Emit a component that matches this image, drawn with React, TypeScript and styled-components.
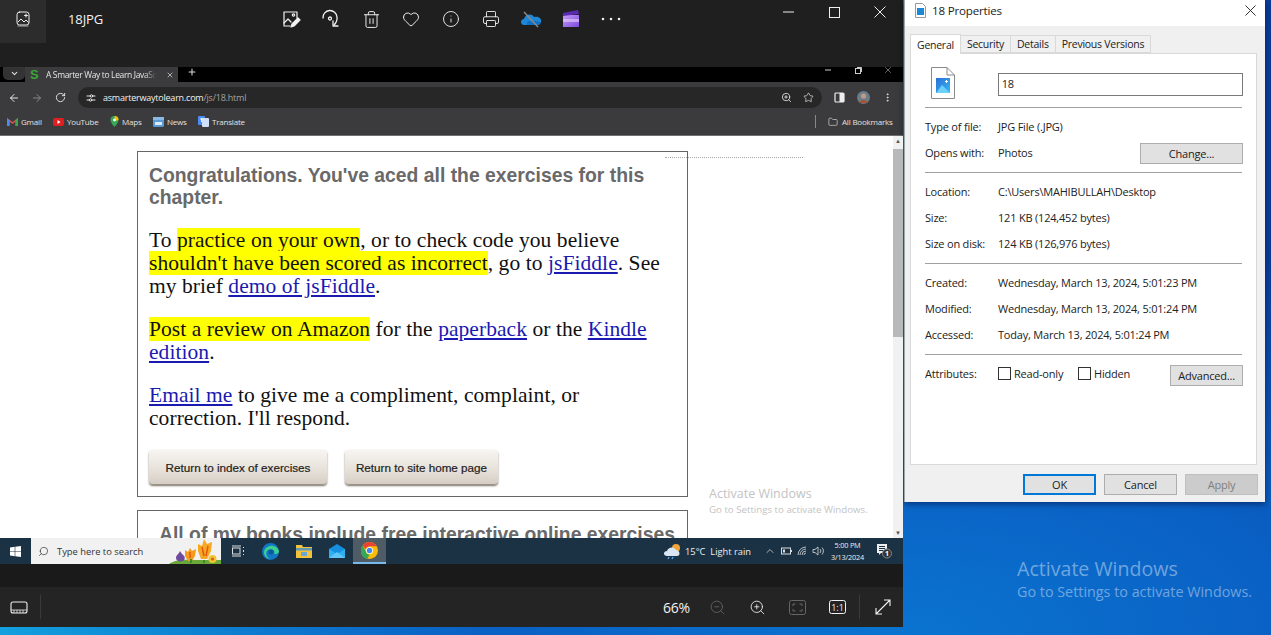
import React from "react";
import styled, { createGlobalStyle } from "styled-components";
import { Heart, Info, Printer, Trash2, Plus, X, ChevronDown, ArrowLeft, ArrowRight, RotateCw, Star, ZoomIn, ZoomOut, Folder, EllipsisVertical, ChevronUp, Search } from "lucide-react";

const Global = createGlobalStyle`
  html, body { margin: 0; padding: 0; width: 1271px; height: 635px; overflow: hidden; }
  * { box-sizing: border-box; }
`;

const Desktop = styled.div`
  width: 1271px; height: 635px; display: flex; align-items: flex-start; overflow: hidden;
  font-family: "Open Sans", "Noto Sans", sans-serif;
  background: radial-gradient(ellipse 900px 420px at 900px 640px, #0a74d0 0%, #0a60c4 45%, rgba(8,66,170,0) 100%), linear-gradient(90deg, #12a0de 0%, #0a7ed0 70%, #0a46ac 90%, #0a3c9c 100%);
`;
const Photos = styled.div`width: 903px; height: 627px; display: flex; flex-direction: column; flex: none; background: #1c1c1c;`;
const TitleBar = styled.div`height: 67px; flex: none; display: flex; align-items: flex-start; background: #1f1f1f; color: #fff;`;
const ThumbButton = styled.div`width: 46px; height: 43px; background: #2c2c2c; display: flex; align-items: center; justify-content: center; padding-bottom: 6px;`;
const FileName = styled.div`width: 225px; padding: 11px 0 0 22px; font-size: 13px; line-height: 17px; letter-spacing: -.1px; color: #f2f2f2;`;
const ToolRow = styled.div`display: flex; height: 38px; margin-left: 0;`;
const ToolSlot = styled.div`width: 40px; height: 38px; display: flex; align-items: center; justify-content: center; color: #f2f2f2;`;
const WinControls = styled.div`margin-left: 134px; display: flex; color: #eee;`;
const WinSlot = styled.div`width: 46px; height: 24px; display: flex; align-items: center; justify-content: center;`;

const Shot = styled.div`height: 497px; flex: none; display: flex; flex-direction: column; overflow: hidden;`;
const TabStrip = styled.div`height: 15px; flex: none; background: #000; display: flex; align-items: flex-start; color: #ddd;`;
const TabList = styled.div`width: 22px; height: 13px; margin-left: 3px; background: #333; border-radius: 0 0 5px 5px; display: flex; align-items: center; justify-content: center;`;
const Tab = styled.div`width: 153px; height: 15px; background: #3b3b3d; display: flex; align-items: center; font-size: 8.5px; color: #e4e4e4; padding-left: 4px;`;
const TabTitle = styled.span`width: 110px; margin-left: 3px; white-space: nowrap; overflow: hidden; letter-spacing: -.36px; -webkit-mask-image: linear-gradient(90deg,#000 90%,transparent);`;
const TabLogo = styled.span`color: #3aa635; font: bold 13px/13px "Liberation Sans", sans-serif; width: 13px; margin-left: 1px;`;
const TabClose = styled.span`margin-left: 10px; display: flex;`;
const StripControls = styled.div`margin-left: auto; display: flex; width: 90px; height: 8px; align-self: flex-start;`;
const StripSlot = styled.div`width: 30px; height: 6px; display: flex; align-items: center; justify-content: center; color: #ccc;`;
const NavBar = styled.div`height: 31px; flex: none; background: #3b3b3d; display: flex; align-items: center; color: #e8e8e8;`;
const NavSlot = styled.div<{ $w: number; $dim?: boolean }>`width: ${p => p.$w}px; display: flex; justify-content: center; align-items: center; flex: none; color: ${p => p.$dim ? "#888" : "inherit"};`;
const UrlPill = styled.div`width: 744px; height: 21px; flex: none; background: #272727; border-radius: 11px; display: flex; align-items: center; font-size: 9px; letter-spacing: -.22px;`;
const UrlHost = styled.span`color: #f0f0f0;`;
const UrlPath = styled.span`color: #a3a3a3; flex: 1;`;
const BookBar = styled.div`height: 23px; flex: none; background: #3b3b3d; border-bottom: 1px solid #6f6f6f; display: flex; align-items: center; padding: 0 0 5px 7px; font-size: 8px; letter-spacing: -.2px; color: #e2e2e2;`;
const BookMark = styled.div<{ $w: number }>`width: ${p => p.$w}px; display: flex; align-items: center; gap: 3px; flex: none;`;
const BookSep = styled.div`width: 1px; height: 13px; background: #888; margin-left: auto;`;
const AllBooks = styled.div`width: 87px; padding-left: 12px; display: flex; align-items: center; gap: 4px;`;

const Viewport = styled.div`height: 402px; flex: none; background: #fff; display: flex; overflow: hidden; position: relative;`;
const Page = styled.div`flex: 1; padding: 15px 0 0 137px; display: flex; flex-direction: column; gap: 13px; height: 402px; overflow: hidden;`;
const Card = styled.div`width: 551px; flex: none; border: 1px solid #666; padding: 12px 11px 0; background: #fff;`;
const Heading = styled.h2<{ $pl?: number }>`margin: 0; padding-left: ${p => p.$pl ?? 0}px; font: bold 19.35px/22px "Liberation Sans", Arial, sans-serif; color: #696969;`;
const Para = styled.p`margin: 20px 0 0; font: 21.5px/23px "Liberation Serif", serif; letter-spacing: .06px; color: #111; width: 518px; ${Heading} + & { margin-top: 21px; }`;
const Mark = styled.span`background: #ff0;`;
const Link = styled.a`color: #1a1ab0; text-decoration: underline;`;
const BtnRow = styled.div`display: flex; gap: 18px; margin: 20px 0 11px;`;
const PageBtn = styled.div<{ $w: number }>`width: ${p => p.$w}px; height: 35px; border-radius: 4px; background: linear-gradient(#f7f5f2, #e6e0d8 60%, #d6cec5); box-shadow: 0 1px 2px #7d7468; border-bottom: 1px solid #9a9186; display: flex; align-items: center; justify-content: center; font: 11.7px "Liberation Sans", Arial, sans-serif; color: #222; -webkit-text-stroke: .2px #222; padding-top: 1px;`;
const Scrollbar = styled.div`width: 10px; flex: none; background: #f1f1f1; display: flex; flex-direction: column; align-items: center; color: #555; font-size: 6px; line-height: 10px;`;
const ScrollThumb = styled.div`width: 10px; height: 188px; margin-top: 3px; background: #b9b9b9;`;
const ScrollDown = styled.div`margin-top: auto;`;
const Dots = styled.div`position: absolute; left: 665px; top: 21px; width: 138px; border-top: 1px dotted #aaa;`;
const WatermarkSmall = styled.div`position: absolute; left: 709px; top: 350px; color: #c3c3c3; font-size: 12.5px; line-height: 16px; span { display: block; font-size: 9.7px; line-height: 15px; }`;

const Taskbar = styled.div`height: 26px; flex: none; background: #1b3244; display: flex; align-items: center; color: #eee; font-size: 9.3px;`;
const StartSlot = styled.div`width: 31px; display: flex; justify-content: center;`;
const SearchBox = styled.div`width: 190px; height: 26px; background: #f1f1f1; display: flex; align-items: center; padding-left: 7px; gap: 8px; color: #333; position: relative; overflow: hidden; font-size: 9.4px;`;
const SearchGlass = styled.span`display: flex; transform: scaleX(-1);`;
const FlowerArt = styled.svg`position: absolute; right: 0; top: 0;`;
const TaskSlot = styled.div<{ $active?: boolean }>`width: 33px; height: 26px; display: flex; align-items: center; justify-content: center; background: ${p => p.$active ? "#4f5c66" : "transparent"}; border-bottom: ${p => p.$active ? "2px solid #76b9ed" : "none"};`;
const Tray = styled.div`margin-left: auto; display: flex; align-items: center; padding-right: 4px; height: 26px;`;
const Weather = styled.div`display: flex; align-items: center; gap: 4px; width: 99px;`;
const TrayIcon = styled.div`width: 16px; display: flex; justify-content: center; color: #ddd;`;
const Clock = styled.div`width: 43px; text-align: center; font-size: 7.3px; line-height: 12px; color: #eee; letter-spacing: -.2px;`;
const Notif = styled.div`width: 30px; display: flex; justify-content: center;`;

const GapBand = styled.div`height: 23px; flex: none; background: #1a1a1a;`;
const BottomBar = styled.div`height: 40px; flex: none; background: #242424; display: flex; align-items: center; color: #f0f0f0;`;
const FilmSlot = styled.div`width: 41px; height: 24px; display: flex; align-items: center; justify-content: center; border-right: 1px solid #3a3a3a; padding-right: 2px;`;
const Zoom = styled.div`margin-left: auto; font-size: 14px; width: 34px; text-align: left; color: #f2f2f2; letter-spacing: -.3px;`;
const BarSlot = styled.div<{ $dim?: boolean }>`width: 40px; display: flex; justify-content: center; color: ${p => p.$dim ? "#666" : "#f2f2f2"};`;
const BarSep = styled.div`width: 1px; height: 24px; background: #3a3a3a; margin: 0 3px 0 2px;`;

const Side = styled.div`margin-left: 1px; width: 361px; flex: none; display: flex; flex-direction: column;`;
const Dialog = styled.div`height: 502px; background: #f0f0f0; display: flex; flex-direction: column; font-size: 11px; color: #222; letter-spacing: -.2px; border-left: 1px solid #9aa; box-shadow: 0 2px 6px rgba(0,0,40,.5);`;
const DialogTitle = styled.div`height: 26px; background: #fff; display: flex; align-items: center; padding: 0 9px 5px 10px; font-size: 11.6px; gap: 6px; color: #222;`;
const DialogClose = styled.div`margin-left: auto; display: flex;`;
const Tabs = styled.div`display: flex; height: 27px; align-items: flex-end; padding-left: 5px; font-size: 10.5px; letter-spacing: -.25px;`;
const TabItem = styled.div<{ $active?: boolean }>`height: ${p => p.$active ? 20 : 18}px; padding: 0 6px; background: ${p => p.$active ? "#fff" : "#f0f0f0"}; border: 1px solid #d9d9d9; border-bottom: ${p => p.$active ? "none" : "1px solid #d9d9d9"}; border-left: ${p => p.$active ? "1px solid #d9d9d9" : "none"}; display: flex; align-items: center; white-space: nowrap; position: relative; z-index: ${p => p.$active ? 1 : 0}; margin-bottom: ${p => p.$active ? -1 : 0}px;`;
const Panel = styled.div`margin-left: 5px; width: 347px; height: 412px; flex: none; background: #fff; border: 1px solid #d9d9d9; padding: 13px 13px 0 14px;`;
const NameRow = styled.div`display: flex; align-items: flex-start; height: 40px;`;
const FileIconSlot = styled.div`width: 73px; padding-left: 6px;`;
const NameInput = styled.div`width: 246px; height: 23px; margin-top: 6px; border: 1px solid #7a7a7a; padding-left: 3px; line-height: 19px;`;
const Sep = styled.div`height: 1px; background: #a0a0a0; width: 317px;`;
const Rows = styled.div<{ $pt: number; $pb: number }>`padding: ${p => p.$pt}px 0 ${p => p.$pb}px;`;
const Row = styled.div`display: flex; height: 26px; align-items: center;`;
const RowLabel = styled.div`width: 73px; flex: none;`;
const RowValue = styled.div`white-space: nowrap;`;
const WinBtn = styled.div<{ $w: number; $dis?: boolean; $def?: boolean }>`width: ${p => p.$w}px; height: 21px; background: ${p => p.$dis ? "#ccc" : "#e1e1e1"}; border: ${p => p.$def ? "2px solid #0078d7" : `1px solid ${p.$dis ? "#bfbfbf" : "#adadad"}`}; display: flex; align-items: center; justify-content: center; color: ${p => p.$dis ? "#808080" : "#222"}; flex: none;`;
const RowBtn = styled.div<{ $top: number }>`margin-left: auto; position: relative; top: ${p => p.$top}px;`;
const CheckBox = styled.span`width: 13px; height: 13px; border: 1px solid #333; background: #fff; display: inline-block; margin-right: 3px; flex: none;`;
const Check = styled.label<{ $w: number }>`display: flex; align-items: center; width: ${p => p.$w}px;`;
const DialogButtons = styled.div`display: flex; justify-content: flex-end; gap: 8px; padding: 9px 7px 0 0;`;
const Wall = styled.div`padding: 55px 0 0 113px; color: rgba(255,255,255,.42); font-size: 19.6px; line-height: 24px; span { display: block; font-size: 14.35px; line-height: 22px; }`;

const svgBase = { fill: "none", stroke: "currentColor", strokeLinecap: "round" as const, strokeLinejoin: "round" as const };

const GalleryIcon = () => (
  <svg width="16" height="16" viewBox="0 0 16 16" {...svgBase} strokeWidth={1}>
    <rect x="2" y="1" width="12" height="13" rx="2.500" stroke="#eee" />
    <path d="M3 11l3-3 3 3 2-2 2.500 2.500M11 3v3M9.500 4.500h3" stroke="#eee" />
    <path d="M3 15h10" stroke="#aaa" />
  </svg>
);
const EditIcon = () => (
  <svg width="20" height="20" viewBox="0 0 20 20" {...svgBase} strokeWidth={1.2}>
    <path d="M9 17H3V3h13v6" />
    <path d="M3 14l4-4 3 3" />
    <circle cx="12.500" cy="6" r="1.200" />
    <path d="M10 18l1-3 6-6 2 2-6 6z" fill="currentColor" />
  </svg>
);
const RotateIcon = () => (
  <svg width="20" height="20" viewBox="0 0 20 20" {...svgBase} strokeWidth={1.3}>
    <path d="M2 9a7 7 0 0 1 14-1c.5 3.500-1 6-3 8" />
    <path d="M12 12v5h5" />
    <circle cx="9" cy="9.500" r="1.500" />
  </svg>
);
const Cloud = () => (
  <svg width="22" height="18" viewBox="0 0 22 18">
    <path d="M4 15c-4 0-4-6 0-6 1-5 8-6 10-2 5-1 8 2 7 5-.5 2-2 3-3 3z" fill="#1f87d8" />
    <path d="M7 15c-1-3 2-5 5-4 3-1 6 1 9 1-.5 2-2 3-3 3z" fill="#0f6fc2" />
    <path d="M4 2l14 15" stroke="#8a8a8a" strokeWidth="1.500" />
  </svg>
);
const Clapper = () => (
  <svg width="18" height="18" viewBox="0 0 18 18">
    <defs><linearGradient id="cl" x1="0" y1="0" x2="1" y2="1"><stop offset="0" stopColor="#c79cf5" /><stop offset="1" stopColor="#7a4be0" /></linearGradient></defs>
    <rect x="1" y="5" width="16" height="12" fill="url(#cl)" />
    <path d="M1 3l15-3 1 4-16 2z" fill="#5a2bb0" />
    <path d="M1 9h16v3H1z" fill="#e8d0fb" opacity=".6" />
  </svg>
);
const DotsIcon = () => (
  <svg width="20" height="4" viewBox="0 0 20 4" fill="#eee"><circle cx="2" cy="2" r="1.300" /><circle cx="10" cy="2" r="1.300" /><circle cx="18" cy="2" r="1.300" /></svg>
);
const Minimize = ({ w = 11 }: { w?: number }) => <svg width={w} height="2" viewBox={`0 0 ${w} 2`}><path d={`M0 1h${w}`} stroke="currentColor" /></svg>;
const MaxBox = () => <svg width="11" height="11" viewBox="0 0 11 11"><rect x=".5" y=".5" width="10" height="10" fill="none" stroke="currentColor" /></svg>;
const Restore = () => <svg width="7" height="7" viewBox="0 0 7 7" fill="none" stroke="currentColor"><rect x=".5" y="1.500" width="5" height="5" /><path d="M2 .5h4.500V5" /></svg>;
const Cross = ({ s = 12 }: { s?: number }) => <svg width={s} height={s} viewBox="0 0 12 12"><path d="M.5.5l11 11M11.500.5l-11 11" stroke="currentColor" fill="none" /></svg>;

const SiteTune = () => (
  <svg width="10" height="10" viewBox="0 0 10 10" {...svgBase} strokeWidth={1}><path d="M1 3h3M7 3h2M1 7h2M6 7h3" /><circle cx="5.500" cy="3" r="1.200" /><circle cx="4.500" cy="7" r="1.200" /></svg>
);
const SidePanel = () => <svg width="11" height="11" viewBox="0 0 11 11"><rect x="1" y="1" width="9" height="9" rx="1" fill="none" stroke="#eee" strokeWidth="1.200" /><rect x="5.500" y="1" width="4.500" height="9" fill="#eee" /></svg>;
const Avatar = () => <svg width="13" height="13" viewBox="0 0 13 13"><circle cx="6.500" cy="6.500" r="6.500" fill="#6c7c8a" /><circle cx="6.500" cy="5" r="2.600" fill="#c29a80" /><path d="M2 12c1-4 8-4 9 0z" fill="#a0553a" /></svg>;

const GmailIcon = () => <svg width="11" height="9" viewBox="0 0 11 9"><path d="M0 9V1l5.500 4L11 1v8H8.500V4.500L5.500 7 2.500 4.500V9z" fill="#d9534a" /><path d="M0 1l2.500 2V9H0z" fill="#4c8bf0" /><path d="M11 1L8.500 3V9H11z" fill="#36a852" /></svg>;
const YtIcon = () => <svg width="11" height="8" viewBox="0 0 11 8"><rect width="11" height="8" rx="2" fill="#e02020" /><path d="M4.500 2l3 2-3 2z" fill="#fff" /></svg>;
const MapsIcon = () => <svg width="9" height="11" viewBox="0 0 9 11"><path d="M4.500 0a4 4 0 0 1 4 4c0 3-4 7-4 7S.5 7 .5 4a4 4 0 0 1 4-4z" fill="#35a853" /><path d="M4.500 0a4 4 0 0 1 4 4L5 5z" fill="#fbbc05" /><circle cx="4.500" cy="4" r="1.400" fill="#fff" /></svg>;
const NewsIcon = () => <svg width="11" height="11" viewBox="0 0 11 11"><rect y="1" width="11" height="10" rx="1.500" fill="#5b9bd5" /><rect y="1" width="11" height="3" fill="#8ab8e8" /><rect x="2" y="6" width="7" height="3" fill="#dbe9f8" /></svg>;
const TranslateIcon = () => <svg width="11" height="11" viewBox="0 0 11 11"><rect width="7" height="9" rx="1" fill="#4c8bf0" /><rect x="4" y="2" width="7" height="9" rx="1" fill="#cfe0f8" /><path d="M2 3h3M3.500 2v4" stroke="#fff" strokeWidth=".8" /></svg>;

const WinLogo = () => <svg width="11" height="11" viewBox="0 0 11 11" fill="#fff"><path d="M0 1.500l4.700-.7v4.400H0zM5.300.7L11 0v5.200H5.300zM0 5.800h4.700v4.400L0 9.500zM5.300 5.800H11V11l-5.700-.8z" /></svg>;
const Flowers = () => (
  <FlowerArt width="60" height="26" viewBox="0 0 60 26">
    <path d="M8 26c5-4 14-5 20-4h32v4z" fill="#6aa83a" />
    <path d="M19 13l2 3c3 2 4 5 1 7-3 1-7 0-7-3 0-3 3-4 4-7z" fill="#6e4a9e" />
    <path d="M24 12l3 2 2-4 2 3 4-2-1 7-3 5h-4l-3-5z" fill="#f59a1c" />
    <path d="M37 6l4 2 2-7 3 5 5-2-1 9-4 8h-6l-3-8z" fill="#f7a823" />
    <path d="M41 9l2 9M47 8l-2 10M29 14l0 6" stroke="#e4570f" strokeWidth="1.500" fill="none" />
    <path d="M43 22v3M30 21v4" stroke="#3f8a2b" strokeWidth="2" />
    <circle cx="51.500" cy="21" r="4" fill="#f4c430" /><circle cx="51.500" cy="21" r="1.500" fill="#c9601a" />
  </FlowerArt>
);
const TaskView = () => <svg width="14" height="12" viewBox="0 0 14 12" fill="none" stroke="#ddd"><rect x="1.500" y="3" width="7.500" height="6" /><path d="M1 1h9M1 11h9M12.500 2v1M12.500 5v2M12.500 9v1" /></svg>;
const Edge = () => (
  <svg width="17" height="17" viewBox="0 0 17 17">
    <circle cx="8.500" cy="8.500" r="8.500" fill="#1178c8" />
    <path d="M2 9c1-7 12-9 15-1 0 3-3 3-5 3 2-4-3-6-6-4-3 2-2 7 2 9-3 0-6-3-6-7z" fill="#3bd08c" />
    <circle cx="9" cy="9" r="2.500" fill="#0c5a9e" />
  </svg>
);
const Explorer = () => <svg width="16" height="14" viewBox="0 0 16 14"><path d="M0 1h6l1 2h9v11H0z" fill="#f5c33b" /><rect y="4" width="16" height="2.500" fill="#3d8fd1" opacity=".8" /><rect x="5" y="8" width="6" height="4" fill="#6aa7d8" /></svg>;
const Mail = () => <svg width="16" height="14" viewBox="0 0 16 14"><path d="M8 0l8 5v9H0V5z" fill="#1490df" /><path d="M0 5l8 5 8-5v9H0z" fill="#2fb1f0" /><path d="M0 14l8-6 8 6z" fill="#60c6f7" /></svg>;
const ChromeIcon = () => (
  <svg width="17" height="17" viewBox="0 0 17 17">
    <circle cx="8.500" cy="8.500" r="8.500" fill="#fbbc05" />
    <path d="M8.500 0a8.500 8.500 0 0 1 7.400 4.300H8.500a4.300 4.300 0 0 0-4 2.700L1.600 3.400A8.500 8.500 0 0 1 8.500 0z" fill="#ea4335" />
    <path d="M1.600 3.400L5 9.900a4.300 4.300 0 0 0 3.500 2.900L6 17A8.500 8.500 0 0 1 1.600 3.400z" fill="#34a853" />
    <circle cx="8.500" cy="8.500" r="3.500" fill="#fff" /><circle cx="8.500" cy="8.500" r="2.700" fill="#4285f4" />
  </svg>
);
const WeatherIcon = () => (
  <svg width="18" height="17" viewBox="0 0 18 17">
    <circle cx="13" cy="5" r="4" fill="#f2a33a" />
    <path d="M4 13c-4 0-4-5 0-5 1-4 7-5 9-1 4 0 5 6 1 6z" fill="#d8e6f4" />
    <path d="M6 14l-1 2M10 14l-1 2" stroke="#4da3e8" strokeWidth="1.500" />
  </svg>
);
const Battery = () => <svg width="11" height="8" viewBox="0 0 11 8" fill="none" stroke="currentColor"><rect x=".5" y="1" width="9" height="6" /><path d="M10.500 3v2" /><rect x="2" y="2.500" width="2" height="3" fill="currentColor" stroke="none" /></svg>;
const Wifi = () => <svg width="11" height="10" viewBox="0 0 11 10" fill="none" stroke="currentColor" strokeWidth=".8"><path d="M1 9a8 8 0 0 1 8-8M3 9a6 6 0 0 1 6-6M5 9a4 4 0 0 1 4-4M7 9a2 2 0 0 1 2-2" /></svg>;
const Volume = () => <svg width="12" height="10" viewBox="0 0 12 10" fill="none" stroke="currentColor" strokeWidth=".8"><path d="M1 3.500h2L6 1v8L3 6.500H1zM8 3a3 3 0 0 1 0 4M10 1.500a5 5 0 0 1 0 7" /></svg>;
const NotifIcon = () => (
  <svg width="16" height="16" viewBox="0 0 16 16">
    <path d="M1 1h10v9H5l-2 2v-2H1z" fill="#eee" />
    <path d="M3 3.500h6M3 5.500h6M3 7.500h4" stroke="#1b3244" />
    <circle cx="11" cy="10.500" r="4.500" fill="#333" stroke="#888" />
    <text x="11" y="13" fontSize="7" fill="#fff" textAnchor="middle" fontFamily="Open Sans" fontWeight="700">1</text>
  </svg>
);
const Filmstrip = () => <svg width="18" height="15" viewBox="0 0 18 15" fill="none" stroke="#eee" strokeWidth="1.100"><rect x="1" y="2" width="16" height="11" rx="2" /><path d="M1 10h16M4 10v3M7 10v3M10 10v3M13 10v3" strokeWidth=".8" /></svg>;
const FitIcon = () => <svg width="17" height="15" viewBox="0 0 17 15" fill="none" stroke="currentColor"><rect x=".5" y=".5" width="16" height="14" rx="2" /><path d="M4 6V4h2.500M13 6V4h-2.500M4 9v2h2.500M13 9v2h-2.500" /></svg>;
const OneToOne = () => <svg width="17" height="14" viewBox="0 0 17 14"><rect x=".5" y=".5" width="16" height="13" rx="2" fill="none" stroke="currentColor" /><text x="8.500" y="10.500" fontSize="9" fill="currentColor" textAnchor="middle" fontFamily="Open Sans">1:1</text></svg>;
const ExpandIcon = () => <svg width="16" height="16" viewBox="0 0 16 16" fill="none" stroke="currentColor" strokeWidth="1.100"><path d="M1 15L15 1M9 1h6v6M1 9v6h6" /></svg>;
const SmallFile = () => <svg width="11" height="15" viewBox="0 0 11 15"><path d="M.5.500h7l3 3v11H.5z" fill="#fff" stroke="#999" /><rect x="2" y="5" width="7" height="7" fill="#1c88d8" /></svg>;
const BigFile = () => (
  <svg width="24" height="32" viewBox="0 0 24 32">
    <path d="M.5.500H16l7.500 7.500v23.500H.5z" fill="#fff" stroke="#8a8a8a" />
    <path d="M16 .5V8h7.500" fill="none" stroke="#8a8a8a" />
    <defs><linearGradient id="bf" x1="0" y1="0" x2="1" y2="1"><stop offset="0" stopColor="#2b6fd6" /><stop offset="1" stopColor="#36b8f2" /></linearGradient></defs>
    <rect x="5" y="11" width="14" height="15" fill="url(#bf)" />
    <path d="M5 26l6-8 8 8z" fill="#6cd0fa" />
    <path d="M15.500 13v3M14 14.500h3" stroke="#fff" />
  </svg>
);

const toolIcons = [<EditIcon key="e" />, <RotateIcon key="r" />, <Trash2 key="t" size={19} strokeWidth={1.200} />, <Heart key="h" size={18} strokeWidth={1.300} />, <Info key="i" size={18} strokeWidth={1.200} />, <Printer key="p" size={18} strokeWidth={1.200} />, <Cloud key="c" />, <Clapper key="cl" />, <DotsIcon key="d" />];

const bookmarks = [
  { name: "Gmail", w: 46, icon: <GmailIcon /> },
  { name: "YouTube", w: 57, icon: <YtIcon /> },
  { name: "Maps", w: 43, icon: <MapsIcon /> },
  { name: "News", w: 45, icon: <NewsIcon /> },
  { name: "Translate", w: 60, icon: <TranslateIcon /> },
];

const info = [
  { items: [["Location:", "C:\\Users\\MAHIBULLAH\\Desktop"], ["Size:", "121 KB (124,452 bytes)"], ["Size on disk:", "124 KB (126,976 bytes)"]], pt: 5, pb: 7 },
  { items: [["Created:", "Wednesday, March 13, 2024, 5:01:23 PM"], ["Modified:", "Wednesday, March 13, 2024, 5:01:24 PM"], ["Accessed:", "Today, March 13, 2024, 5:01:24 PM"]], pt: 5, pb: 7 },
];

export default function App() {
  return (
    <>
      <Global />
      <Desktop>
        <Photos>
          <TitleBar>
            <ThumbButton><GalleryIcon /></ThumbButton>
            <FileName>18JPG</FileName>
            <ToolRow>{toolIcons.map((icon, i) => <ToolSlot key={i}>{icon}</ToolSlot>)}</ToolRow>
            <WinControls>
              <WinSlot><Minimize /></WinSlot>
              <WinSlot><MaxBox /></WinSlot>
              <WinSlot><Cross /></WinSlot>
            </WinControls>
          </TitleBar>
          <Shot>
            <TabStrip>
              <TabList><ChevronDown size={9} strokeWidth={3} /></TabList>
              <Tab><TabLogo>S</TabLogo><TabTitle>A Smarter Way to Learn JavaScript</TabTitle><TabClose><X size={8} strokeWidth={2} /></TabClose></Tab>
              <NavSlot $w={28}><Plus size={10} strokeWidth={2.500} /></NavSlot>
              <StripControls>
                <StripSlot><Minimize w={6} /></StripSlot>
                <StripSlot><Restore /></StripSlot>
                <StripSlot><Cross s={6} /></StripSlot>
              </StripControls>
            </TabStrip>
            <NavBar>
              <NavSlot $w={27}><ArrowLeft size={12} strokeWidth={2} /></NavSlot>
              <NavSlot $w={20} $dim><ArrowRight size={12} strokeWidth={2} /></NavSlot>
              <NavSlot $w={27}><RotateCw size={11} strokeWidth={2} /></NavSlot>
              <NavSlot $w={4} />
              <UrlPill>
                <NavSlot $w={25}><SiteTune /></NavSlot>
                <UrlHost>asmarterwaytolearn.com</UrlHost><UrlPath>/js/18.html</UrlPath>
                <NavSlot $w={22}><ZoomIn size={11} strokeWidth={1.800} /></NavSlot>
                <NavSlot $w={22}><Star size={11} strokeWidth={1.500} /></NavSlot>
                <NavSlot $w={3} />
              </UrlPill>
              <NavSlot $w={35}><SidePanel /></NavSlot>
              <NavSlot $w={13}><Avatar /></NavSlot>
              <NavSlot $w={35}><EllipsisVertical size={11} strokeWidth={2} /></NavSlot>
            </NavBar>
            <BookBar>
              {bookmarks.map(b => <BookMark key={b.name} $w={b.w}>{b.icon}<span>{b.name}</span></BookMark>)}
              <BookSep />
              <AllBooks><Folder size={10} strokeWidth={1.500} /><span>All Bookmarks</span></AllBooks>
            </BookBar>
            <Viewport>
              <Page>
                <Card>
                  <Heading>Congratulations. You've aced all the exercises for this chapter.</Heading>
                  <Para>To <Mark>practice on your own</Mark>, or to check code you believe <Mark>shouldn't have been scored as incorrect</Mark>, go to <Link>jsFiddle</Link>. See my brief <Link>demo of jsFiddle</Link>.</Para>
                  <Para>
                    <Mark>Post a review on Amazon</Mark> for the <Link>paperback</Link> or the <Link>Kindle edition</Link>.
                  </Para>
                  <Para><Link>Email me</Link> to give me a compliment, complaint, or correction. I'll respond.</Para>
                  <BtnRow>
                    <PageBtn $w={178}>Return to index of exercises</PageBtn>
                    <PageBtn $w={153}>Return to site home page</PageBtn>
                  </BtnRow>
                </Card>
                <Card>
                  <Heading $pl={10}>All of my books include free interactive online exercises</Heading>
                </Card>
              </Page>
              <Scrollbar><span>▲</span><ScrollThumb /><ScrollDown>▼</ScrollDown></Scrollbar>
              <Dots />
              <WatermarkSmall>Activate Windows<span>Go to Settings to activate Windows.</span></WatermarkSmall>
            </Viewport>
            <Taskbar>
              <StartSlot><WinLogo /></StartSlot>
              <SearchBox><SearchGlass><Search size={11} strokeWidth={1.500} /></SearchGlass><span>Type here to search</span><Flowers /></SearchBox>
              <TaskSlot><TaskView /></TaskSlot>
              <TaskSlot><Edge /></TaskSlot>
              <TaskSlot><Explorer /></TaskSlot>
              <TaskSlot><Mail /></TaskSlot>
              <TaskSlot $active><ChromeIcon /></TaskSlot>
              <Tray>
                <Weather><WeatherIcon /><span>15°C&nbsp;&nbsp;Light rain</span></Weather>
                <TrayIcon><ChevronUp size={12} strokeWidth={1.500} /></TrayIcon>
                <TrayIcon><Battery /></TrayIcon>
                <TrayIcon><Wifi /></TrayIcon>
                <TrayIcon><Volume /></TrayIcon>
                <Clock>5:00 PM<br />3/13/2024</Clock>
                <Notif><NotifIcon /></Notif>
              </Tray>
            </Taskbar>
          </Shot>
          <GapBand />
          <BottomBar>
            <FilmSlot><Filmstrip /></FilmSlot>
            <Zoom>66%</Zoom>
            <BarSlot $dim><ZoomOut size={17} strokeWidth={1.200} /></BarSlot>
            <BarSlot><ZoomIn size={17} strokeWidth={1.200} /></BarSlot>
            <BarSlot $dim><FitIcon /></BarSlot>
            <BarSlot><OneToOne /></BarSlot>
            <BarSep />
            <BarSlot><ExpandIcon /></BarSlot>
          </BottomBar>
        </Photos>
        <Side>
          <Dialog>
            <DialogTitle>
              <SmallFile />
              <span>18 Properties</span>
              <DialogClose><Cross s={11} /></DialogClose>
            </DialogTitle>
            <Tabs>
              <TabItem $active>General</TabItem>
              <TabItem>Security</TabItem>
              <TabItem>Details</TabItem>
              <TabItem>Previous Versions</TabItem>
            </Tabs>
            <Panel>
              <NameRow>
                <FileIconSlot><BigFile /></FileIconSlot>
                <NameInput>18</NameInput>
              </NameRow>
              <Sep />
              <Rows $pt={5} $pb={7}>
                <Row><RowLabel>Type of file:</RowLabel><RowValue>JPG File (.JPG)</RowValue></Row>
                <Row><RowLabel>Opens with:</RowLabel><RowValue>Photos</RowValue><RowBtn $top={1}><WinBtn $w={103}>Change...</WinBtn></RowBtn></Row>
              </Rows>
              <Sep />
              {info.map((g, i) => (
                <React.Fragment key={i}>
                  <Rows $pt={g.pt} $pb={g.pb}>
                    {g.items.map(([k, v]) => <Row key={k}><RowLabel>{k}</RowLabel><RowValue>{v}</RowValue></Row>)}
                  </Rows>
                  <Sep />
                </React.Fragment>
              ))}
              <Rows $pt={5} $pb={0}>
                <Row>
                  <RowLabel>Attributes:</RowLabel>
                  <Check $w={80}><CheckBox />Read-only</Check>
                  <Check $w={80}><CheckBox />Hidden</Check>
                  <RowBtn $top={2}><WinBtn $w={73}>Advanced...</WinBtn></RowBtn>
                </Row>
              </Rows>
            </Panel>
            <DialogButtons>
              <WinBtn $w={73} $def>OK</WinBtn>
              <WinBtn $w={73}>Cancel</WinBtn>
              <WinBtn $w={73} $dis>Apply</WinBtn>
            </DialogButtons>
          </Dialog>
          <Wall>Activate Windows<span>Go to Settings to activate Windows.</span></Wall>
        </Side>
      </Desktop>
    </>
  );
}
